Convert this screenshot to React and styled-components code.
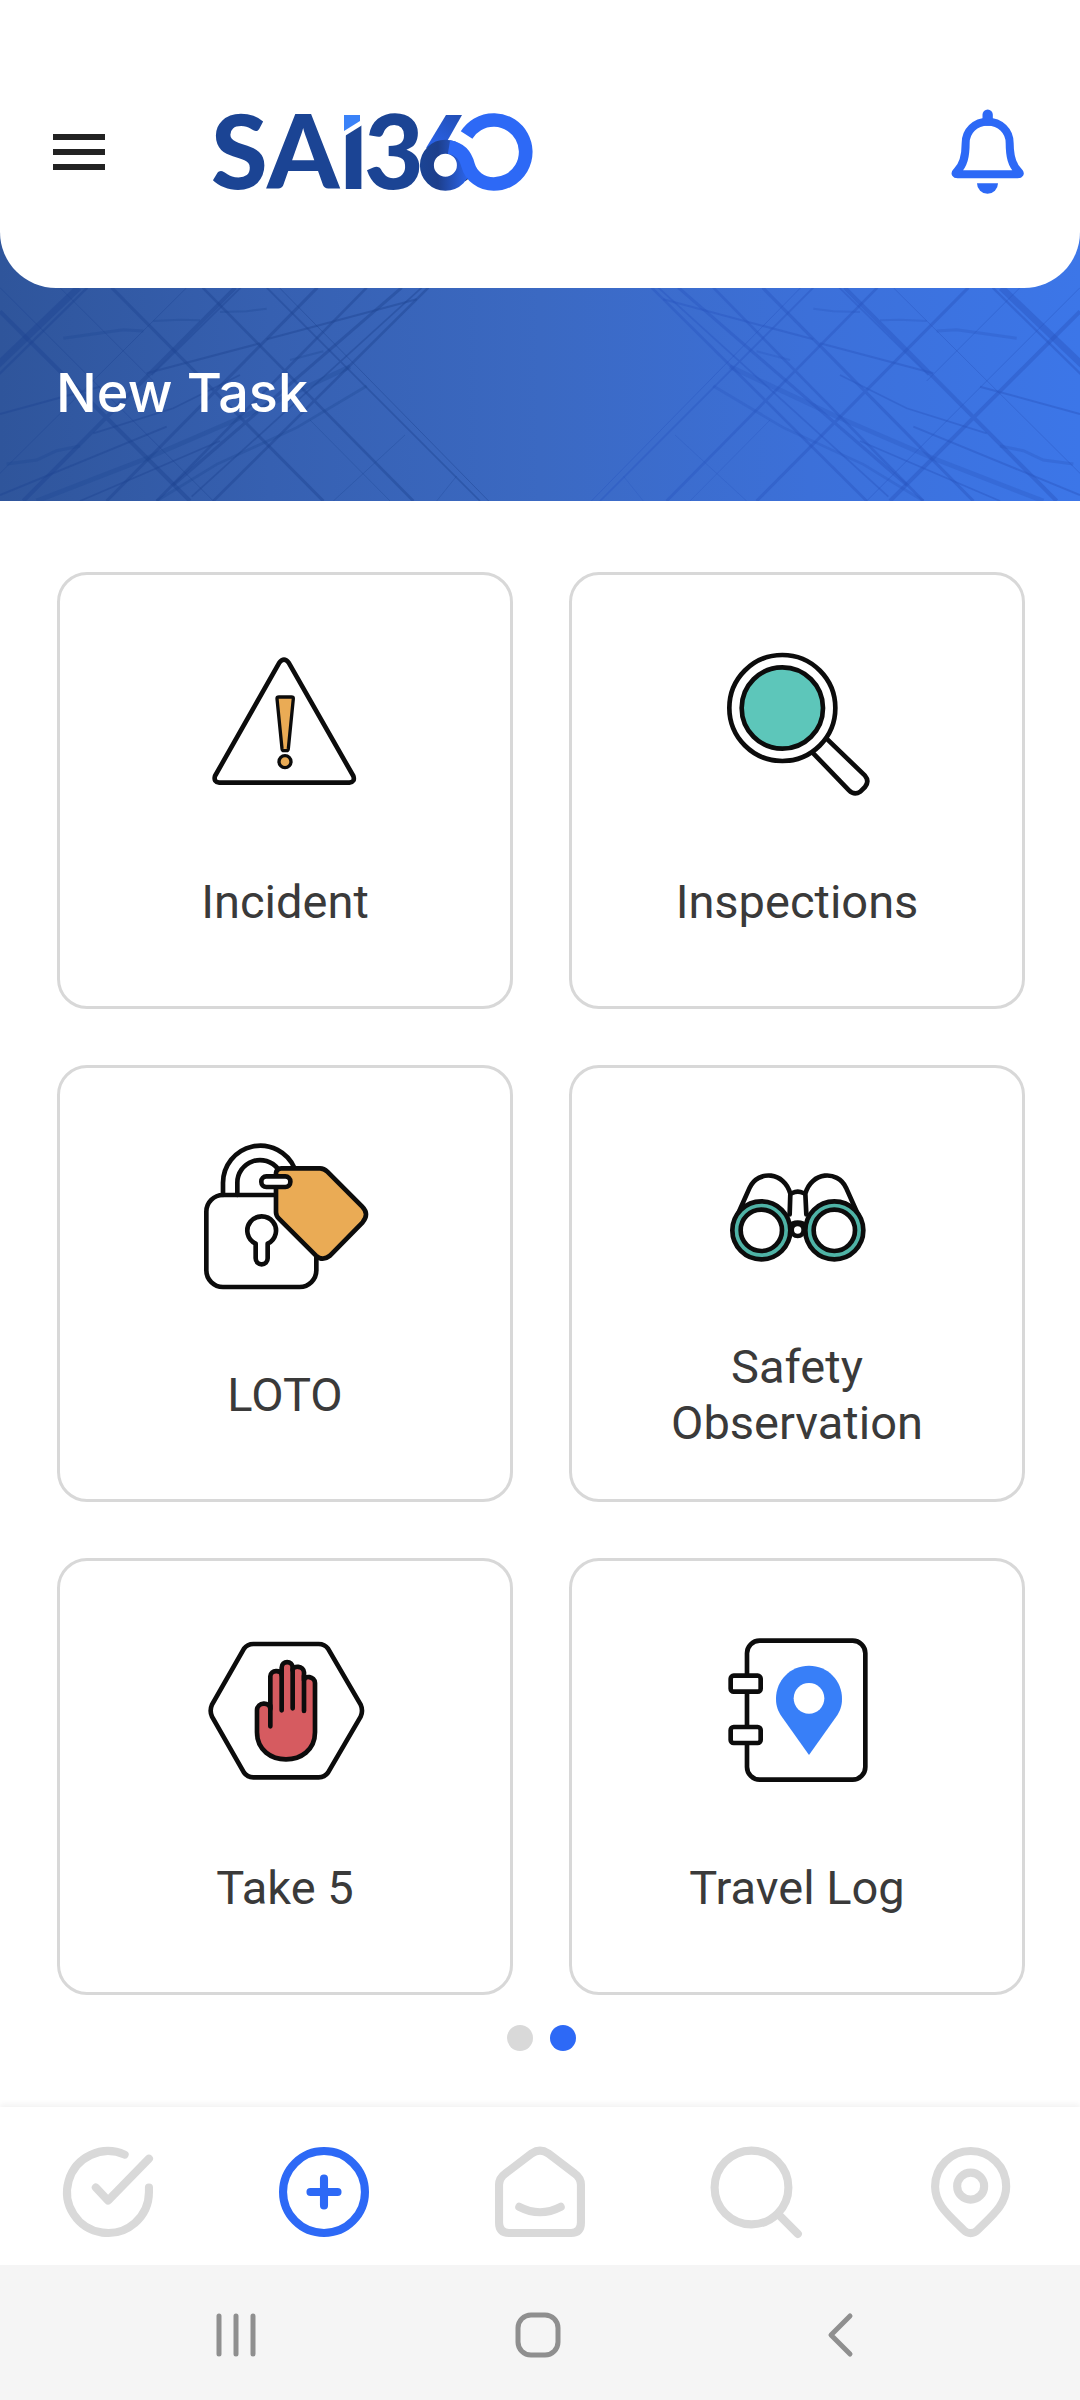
import React from "react";

// style
import styled, { createGlobalStyle } from "styled-components";

const NAVY = "#1b4494";
const BLUE = "#2d69f6";
const GREY = "#d9d9d9";

const TASKS = [
  { name: "Incident", Icon: IncidentIcon },
  { name: "Inspections", Icon: InspectionsIcon },
  { name: "LOTO", Icon: LotoIcon },
  { name: "Safety Observation", Icon: ObservationIcon },
  { name: "Take 5", Icon: TakeFiveIcon },
  { name: "Travel Log", Icon: TravelLogIcon },
];

const TABS = [
  { name: "My tasks", href: "#tasks", Icon: CheckIcon },
  { name: "New task", href: "#new", Icon: PlusIcon, active: true },
  { name: "Home", href: "#home", Icon: HomeIcon },
  { name: "Search", href: "#search", Icon: SearchIcon },
  { name: "Places", href: "#places", Icon: PinIcon },
];

function App() {
  return (
    <Page>
      <GlobalStyle />
      <Header>
        <IconButton aria-label="Menu">
          <svg width="54" height="36" viewBox="0 0 54 36" fill="#222">
            <path d="M1 0h52v6H1zM1 15h52v6H1zM1 30h52v6H1z" />
          </svg>
        </IconButton>
        <HomeLink href="#home" aria-label="SAI360">
          <Logo />
        </HomeLink>
        <IconButton aria-label="Notifications">
          <BellIcon />
        </IconButton>
      </Header>

      <Banner>
        <BannerLines />
        <BannerTitle>New Task</BannerTitle>
      </Banner>

      <Main>
        <CardGrid>
          {TASKS.map(({ name, Icon }) => (
            <TaskCard key={name}>
              <Icon />
              <TaskName>{name}</TaskName>
            </TaskCard>
          ))}
        </CardGrid>
        <Dots>
          <Dot aria-label="Page 1" />
          <Dot aria-label="Page 2" $active />
        </Dots>
      </Main>

      <TabBar>
        {TABS.map(({ name, href, Icon, active }) => (
          <Tab key={name} href={href} aria-label={name} $active={active}>
            <TabIcon viewBox="0 0 24 24">
              <Icon />
            </TabIcon>
          </Tab>
        ))}
      </TabBar>

      <SystemBar>
        <SystemButton aria-label="Recent apps">
          <svg width="44" height="48" viewBox="0 0 44 48">
            <path d="M5 5v38M22 5v38M39 5v38" />
          </svg>
        </SystemButton>
        <SystemButton aria-label="Home screen">
          <svg width="48" height="48" viewBox="0 0 48 48">
            <rect x="4" y="4" width="40" height="40" rx="13" />
          </svg>
        </SystemButton>
        <SystemButton aria-label="Back">
          <svg width="32" height="48" viewBox="0 0 32 48">
            <path d="M26 5 7 24l19 19" />
          </svg>
        </SystemButton>
      </SystemBar>
    </Page>
  );
}

function Logo() {
  return (
    <svg width="336" height="138" viewBox="206 83 336 138">
      <defs>
        <linearGradient id="loop" x1="420" x2="471" y1="0" y2="0" gradientUnits="userSpaceOnUse">
          <stop offset="0" stopColor={NAVY} />
          <stop offset="0.35" stopColor="#1d3f8c" />
          <stop offset="1" stopColor={BLUE} />
        </linearGradient>
        <linearGradient id="arm" x1="430" x2="455" y1="146" y2="115" gradientUnits="userSpaceOnUse">
          <stop offset="0" stopColor="#2a63ea" />
          <stop offset="1" stopColor="#2350b8" />
        </linearGradient>
      </defs>
      <LogoText x="211 267 338 364" y="189">
        SAI3
      </LogoText>
      {/* cut tip of the I */}
      <path d="M340 112h24v12l-24 15z" fill="#fff" />
      <path d="M344 115h16v6l-16 10z" fill="#3a82f8" />
      {/* small loop */}
      <path d="M446 115h16l-17 30-19 3z" fill="url(#arm)" />
      <path d="M463 178c6-4 5-9 1-14" stroke="#10264f" strokeWidth="8" fill="none" />
      <circle cx="445.4" cy="165.2" r="18.5" fill="none" stroke="url(#loop)" strokeWidth="14" />
      {/* big loop, running out of the small one */}
      <path
        d="M449 147c12 2 17 10 19 18 3 11 13 19 25.8 19a32 32 0 1 0-27.2-49"
        fill="none"
        stroke={BLUE}
        strokeWidth="13.7"
      />
    </svg>
  );
}

function BellIcon() {
  return (
    <svg width="74" height="90" viewBox="210 80 222 270">
      <path
        d="M323 124c-38 0-66 28-66 64 0 40-6 66-27 86-6 6-3 8 3 8h180c6 0 9-2 3-8-21-20-27-46-27-86 0-36-28-64-66-64z"
        fill="none"
        stroke={BLUE}
        strokeWidth="24"
        strokeLinejoin="round"
      />
      <path d="M323 103v18" stroke={BLUE} strokeWidth="31" strokeLinecap="round" />
      <path d="M291 309h63a31.5 31.5 0 0 1-63 0z" fill={BLUE} />
    </svg>
  );
}

// steel beams on the left half, mirrored for the right half
function BannerLines() {
  return (
    <LinesSvg viewBox="0 -36 3240 819" preserveAspectRatio="none" aria-hidden="true">
      <defs>
        <g id="beams">
          <path strokeWidth="20" d="M236 143-20 388" />
          <path strokeWidth="7" d="M262 143-20 420" />
          <path strokeWidth="12" d="M706 143 70 783M0 214l570 569" />
          <path strokeWidth="9" d="M952 143 320 783M335 143l635 640M1205 143 520 735" />
          <path strokeWidth="8" d="M608 143l632 640M1100 143 640 610 470 783M1285 143 640 783" />
          <path strokeWidth="5" d="M800 143l640 640M1265 143 575 770M722 143 455 405" />
          <path strokeWidth="3" d="M838 143l628 640M0 700 560 143M0 143l640 640M180 143l280 280" />
          <path strokeWidth="6" d="M0 522 300 440M440 400l340-90M800 298l450-120M0 765l500-205" />
          <path strokeWidth="14" opacity="0.7" d="M110 783 440 655 730 530 1050 380" />
          <path strokeWidth="8" opacity="0.7" d="M470 783l180-110 240-110 210-125" />
          <path strokeWidth="5" d="M280 580l240-75 200-100M240 783l420-180" />
          <path strokeWidth="9" opacity="0.7" d="M20 672l90-12 60-28 70-14M190 295l180-26 60 4" />
          <path strokeWidth="6" opacity="0.7" d="M460 243l80-4 60 2M660 216l80-2 60-8M870 360l100-26" />
          <path strokeWidth="3" opacity="0.7" d="M1000 783l215-198M1310 783l60-75M930 540l240 243" />
        </g>
      </defs>
      <g fill="none" stroke="#1e4592" strokeOpacity="0.45">
        <use href="#beams" />
      </g>
      <g fill="none" stroke="#2a56c0" strokeOpacity="0.45" transform="translate(3240) scale(-1 1)">
        <use href="#beams" />
      </g>
    </LinesSvg>
  );
}

function IncidentIcon() {
  return (
    <TaskIcon viewBox="435 192 600 600">
      <path d="M718 308q14-18 28 0l194 340q6 18-12 20H538q-18-2-13-20z" />
      <path d="M711 416q0-5 6-5h37q6 0 6 5l-15 150q-1 6-5 6h-9q-4 0-5-6z" fill="#eaab55" strokeWidth="10" />
      <circle cx="735" cy="605" r="18" fill="#eaab55" strokeWidth="10" />
    </TaskIcon>
  );
}

function InspectionsIcon() {
  return (
    <TaskIcon viewBox="411 192 600 600">
      <path d="M757 577l110 114q16 16 34 4l14-14q14-18 0-34L799 535" />
      <circle cx="667" cy="444" r="159" fill="#fff" />
      <circle cx="667" cy="444" r="122" fill="#5dc6ba" />
    </TaskIcon>
  );
}

function LotoIcon() {
  return (
    <TaskIcon viewBox="435 174 600 600">
      <path d="M549 408v-34a112 112 0 0 1 215-46M592 408v-36a68 68 0 0 1 122-42" />
      <rect x="499" y="408" width="330" height="276" rx="50" />
      <path d="M647 554a43 43 0 1 1 36 0v44a18 18 0 0 1-36 0z" />
      <path
        d="M708 342q2-14 16-14h116q12 0 22 10l104 104q12 12 12 24t-10 24L870 590q-22 18-42 0L716 478q-8-8-8-18z"
        fill="#eaab55"
      />
      <rect x="664" y="352" width="87" height="32" rx="15" fill="#fff" />
    </TaskIcon>
  );
}

function ObservationIcon() {
  return (
    <TaskIcon viewBox="411 174 600 600">
      <path d="M527 480l42-94c26-54 104-48 122 18l-2 62M900 480l-42-94c-26-54-104-48-122 18l3 62" />
      <path d="M697 402q16-8 33 0M697 494q16-6 33 0" />
      <circle cx="713" cy="513" r="18" />
      <circle cx="604" cy="514" r="74" fill="#fff" stroke="#4fb3a6" strokeWidth="20" />
      <circle cx="823" cy="514" r="74" fill="#fff" stroke="#4fb3a6" strokeWidth="20" />
      <circle cx="604" cy="514" r="87" />
      <circle cx="604" cy="514" r="62" />
      <circle cx="823" cy="514" r="87" />
      <circle cx="823" cy="514" r="62" />
    </TaskIcon>
  );
}

function TakeFiveIcon() {
  return (
    <TaskIcon viewBox="435 183 600 600">
      <path d="M640 285h196q18 0 28 14l98 168q8 18 0 36l-98 168q-10 14-28 14H640q-18 0-28-14l-96-168q-8-18 0-36l96-168q10-14 28-14z" />
      <path
        d="M651 484c0-26 40-26 40-4V382c0-20 34-20 34-4v-22c0-22 33-22 33 0v8c0-16 34-14 34 6v24c0-16 33-12 33 8v148c0 108-174 108-174 0z"
        fill="#d65b60"
      />
      <path d="M691 470v62M725 370v114M758 360v118M792 380v106" />
    </TaskIcon>
  );
}

function TravelLogIcon() {
  return (
    <TaskIcon viewBox="411 183 600 600">
      <rect x="561" y="275" width="355" height="417" rx="38" />
      <rect x="512" y="380" width="90" height="48" rx="9" fill="#fff" />
      <rect x="512" y="534" width="90" height="48" rx="9" fill="#fff" />
      <path
        d="M747 350c-56 0-99 44-99 99 0 22 6 38 18 55l81 114 81-114c12-17 18-33 18-55 0-55-43-99-99-99z"
        fill="#387ff8"
        stroke="none"
      />
      <circle cx="747" cy="448" r="46" fill="#fff" stroke="none" />
    </TaskIcon>
  );
}

function CheckIcon() {
  return <path d="M21.1 11v1a9.1 9.1 0 1 1-5.4-8.3M9.3 11l2.7 2.9 9.1-9.3" />;
}

function PlusIcon() {
  return (
    <>
      <circle cx="12" cy="12" r="9.1" />
      <path d="M9 12h6M12 9v6" />
    </>
  );
}

function HomeIcon() {
  return (
    <>
      <path d="M2.9 10.4q0-1.5 1.400-2.5l5.9-4.5q1.8-1.2 3.6 0l5.9 4.5q1.4 1 1.4 2.5v8.4q0 2.3-2.2 2.3H5.1q-2.2 0-2.2-2.3z" />
      <path d="M7.4 15.3q4.6 2.4 9.2 0" />
    </>
  );
}

function SearchIcon() {
  return (
    <>
      <circle cx="11" cy="11" r="8.2" />
      <path d="M17.2 17.2l4.1 4.1" />
    </>
  );
}

function PinIcon() {
  return (
    <>
      <path d="M11.7 2.9c-4.4 0-7.9 3.5-7.9 7.9 0 4 3 6.3 6.4 9.7a2.1 2.1 0 0 0 3 0c3.4-3.4 6.4-5.7 6.4-9.7 0-4.4-3.5-7.9-7.9-7.9z" />
      <circle cx="11.7" cy="10.7" r="3" />
    </>
  );
}

const GlobalStyle = createGlobalStyle`
  * {
    box-sizing: border-box;
  }

  body {
    margin: 0;
    background-color: #fff;
    font-family: Roboto, sans-serif;
  }

  button {
    padding: 0;
    border: none;
    background: none;
    font: inherit;
    cursor: pointer;
  }

  svg {
    display: block;
  }
`;

const Page = styled.div`
  display: flex;
  flex-direction: column;
  min-height: 100vh;
`;

const Header = styled.header`
  position: relative;
  z-index: 1;
  display: flex;
  align-items: center;
  height: 288px;
  padding: 15px 56px 0 52px;
  border-radius: 0 0 56px 56px;
  background-color: #fff;
`;

const IconButton = styled.button`
  flex: none;
`;

const HomeLink = styled.a`
  margin: 0 auto 0 100px;
`;

const LogoText = styled.text`
  fill: ${NAVY};
  font-family: Lato, sans-serif;
  font-size: 103px;
  font-weight: 900;
`;

const Banner = styled.section`
  position: relative;
  display: flex;
  align-items: center;
  height: 273px;
  margin-top: -60px;
  padding: 56px 56px 0;
  background: linear-gradient(90deg, #2f559b 0%, #3660b1 25%, #3b69c2 50%, #3c70d9 75%, #3c76e8 100%);
`;

const LinesSvg = styled.svg`
  position: absolute;
  inset: 0;
  width: 100%;
  height: 100%;
`;

const BannerTitle = styled.h1`
  position: relative;
  margin: 0;
  color: #fff;
  font-family: Inter, sans-serif;
  font-size: 54px;
  font-weight: 500;
  line-height: 68px;
`;

const Main = styled.main`
  flex: 1;
  padding: 71px 55px 0 57px;
`;

const CardGrid = styled.div`
  display: grid;
  grid-template-columns: 1fr 1fr;
  gap: 56px;
`;

const TaskCard = styled.button`
  display: flex;
  flex-direction: column;
  align-items: center;
  height: 437px;
  padding-top: 49px;
  border: 3px solid #d8d8d8;
  border-radius: 30px;
`;

const TaskIcon = styled.svg`
  width: 200px;
  height: 200px;
  fill: none;
  stroke: #0c0c0c;
  stroke-width: 14px;
  stroke-linecap: round;
  stroke-linejoin: round;
`;

const TaskName = styled.span`
  display: flex;
  align-items: center;
  justify-content: center;
  width: 280px;
  height: 112px;
  margin-top: 22px;
  color: #3a3a3a;
  font-size: 47px;
  line-height: 56px;
  text-align: center;
`;

const Dots = styled.div`
  display: flex;
  justify-content: center;
  gap: 17px;
  margin: 30px 0 56px;
`;

const Dot = styled.button`
  width: 26px;
  height: 26px;
  border-radius: 50%;
  background-color: ${(props) => (props.$active ? BLUE : GREY)};
`;

const TabBar = styled.nav`
  display: grid;
  grid-template-columns: repeat(5, 1fr);
  height: 158px;
  padding-top: 12px;
  background-color: #fff;
  box-shadow: 0 -3px 6px rgba(0, 0, 0, 0.05);
`;

const Tab = styled.a`
  display: flex;
  align-items: center;
  justify-content: center;
  color: ${(props) => (props.$active ? BLUE : GREY)};
`;

const TabIcon = styled.svg`
  width: 108px;
  height: 108px;
  fill: none;
  stroke: currentColor;
  stroke-width: 1.8;
  stroke-linecap: round;
  stroke-linejoin: round;
`;

const SystemBar = styled.div`
  position: relative;
  display: grid;
  grid-template-columns: repeat(3, 1fr);
  height: 135px;
  padding: 4px 89px 0 85px;
  background-color: #f5f5f5;
`;

const SystemButton = styled.button`
  display: flex;
  align-items: center;
  justify-content: center;

  svg {
    fill: none;
    stroke: #8f8f8f;
    stroke-width: 5px;
    stroke-linecap: round;
    stroke-linejoin: round;
  }
`;

export default App;
